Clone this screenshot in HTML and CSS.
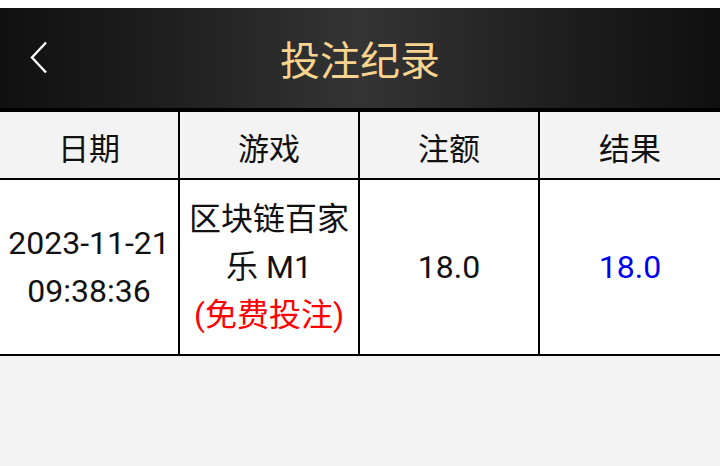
FILE: index.html
```html
<!DOCTYPE html>
<html lang="zh-CN">
<head>
<meta charset="utf-8">
<title>投注纪录</title>
<link rel="stylesheet" href="styles.css">
</head>
<body>
<div class="page">
  <div class="topstrip"></div>
  <header class="navbar">
    <span class="back">
      <svg width="20" height="34" viewBox="0 0 20 34"><path d="M16 1.5 L2 16.5 L16 31.5" fill="none" stroke="#ffffff" stroke-width="2.4" stroke-linecap="butt" stroke-linejoin="miter"/></svg>
    </span>
    <h1 class="title">投注纪录</h1>
  </header>
  <div class="table">
    <div class="row head">
      <div class="cell">日期</div>
      <div class="cell">游戏</div>
      <div class="cell">注额</div>
      <div class="cell">结果</div>
    </div>
    <div class="row body">
      <div class="cell">2023-11-21<br>09:38:36</div>
      <div class="cell"><span>区块链百家乐 M1</span><span class="free">(免费投注)</span></div>
      <div class="cell">18.0</div>
      <div class="cell win">18.0</div>
    </div>
  </div>
</div>
</body>
</html>
```

FILE: styles.css
```css
html, body {
  margin: 0;
  padding: 0;
}
body {
  background: #f3f3f3;
  font-family: Roboto, "Noto Sans CJK SC", sans-serif;
  width: 720px;
  height: 466px;
  overflow: hidden;
}
.page {
  display: flex;
  flex-direction: column;
}
.topstrip {
  height: 8px;
  background: #ffffff;
}
.navbar {
  height: 100px;
  display: flex;
  align-items: center;
  justify-content: center;
  position: relative;
  background: linear-gradient(to right, #101010 0%, #202020 25%, #343434 50%, #202020 75%, #0f0f0f 100%);
}
.back {
  position: absolute;
  left: 30px;
  top: 33px;
  width: 20px;
  height: 34px;
}
.back svg {
  display: block;
}
.title {
  margin: 0;
  font-weight: normal;
  font-size: 40px;
  color: #f7d48f;
  letter-spacing: 0;
  font-family: "Noto Sans CJK SC", sans-serif;
  line-height: 1;
}
.table {
  border-top: 4px solid #000;
  border-bottom: 2px solid #000;
}
.row {
  display: grid;
  grid-template-columns: repeat(4, 180px);
}
.cell {
  display: flex;
  flex-direction: column;
  align-items: center;
  justify-content: center;
  text-align: center;
  font-size: 32px;
  color: #111;
  border-right: 2px solid #000;
  box-sizing: border-box;
}
.cell:last-child {
  border-right: none;
}
.head {
  height: 68px;
  background: #f3f3f3;
  border-bottom: 2px solid #000;
  box-sizing: border-box;
}
.head .cell {
  font-size: 31px;
  padding-top: 2px;
}
.body {
  background: #ffffff;
  height: 174px;
}
.body .cell {
  line-height: 48px;
  padding: 0 1px;
}
.free {
  color: #ff0000;
}
.win {
  color: #0000ee;
}
```
